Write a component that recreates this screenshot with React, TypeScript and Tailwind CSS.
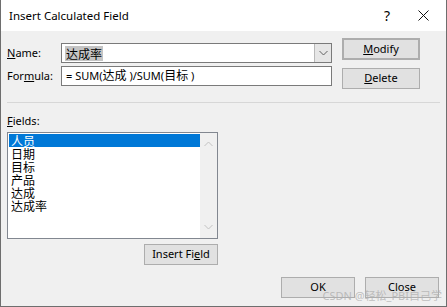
const UI = "font-['Noto_Sans','Noto_Sans_CJK_SC',sans-serif]";
const CJK = "font-['Noto_Sans_CJK_SC',sans-serif]";

function Btn({ children, className = '' }: { children: React.ReactNode; className?: string }) {
  return (
    <div
      className={`flex items-center justify-center bg-[#e1e1e1] border border-[#adadad] text-[11px] text-black ${className}`}
    >
      {children}
    </div>
  );
}

function Chevron({ up = false, color = '#606060' }: { up?: boolean; color?: string }) {
  return (
    <svg width="9" height="6" viewBox="0 0 9 6">
      <path
        d={up ? 'M0.5 5 L4.5 1 L8.5 5' : 'M0.5 1 L4.5 5 L8.5 1'}
        fill="none"
        stroke={color}
        strokeWidth="1"
      />
    </svg>
  );
}

const FIELDS = ['人员', '日期', '目标', '产品', '达成', '达成率'];

export default function App() {
  return (
    <div className={`relative w-[447px] h-[307px] bg-white ${UI} text-black overflow-hidden`}>
      <div className="flex flex-col h-full border-x border-b border-[#6e6e6e]">
        {/* title bar */}
        <div className="h-[31px] flex items-center bg-white shrink-0">
          <span className="pl-[8px] text-[11.5px] leading-none">Insert Calculated Field</span>
          <span className="ml-auto mr-[28px] text-[14px] leading-none">?</span>
          <svg width="11" height="11" viewBox="0 0 11 11" className="mr-[17px]">
            <path d="M0.5 0.5 L10.5 10.5 M10.5 0.5 L0.5 10.5" stroke="#111" strokeWidth="1" />
          </svg>
        </div>

        {/* body */}
        <div className="flex-1 bg-[#f0f0f0] flex flex-col px-[6px]">
          <div className="flex">
            <div className="flex flex-col gap-[3px] pt-[12px]">
              <div className="flex items-center h-[20px]">
                <span className="w-[54px] text-[11px]">
                  <u>N</u>ame:
                </span>
                <div className="w-[271px] h-[20px] bg-white border border-[#7a7a7a] flex items-center">
                  <span className={`ml-[3px] px-[1px] bg-[#c4c4c4] text-[12px] leading-[15px] ${CJK}`}>达成率</span>
                  <div className="ml-auto h-full w-[17px] bg-[#e6e6e6] border-l border-[#b9b9b9] flex items-center justify-center">
                    <Chevron />
                  </div>
                </div>
              </div>
              <div className="flex items-center h-[20px]">
                <span className="w-[54px] text-[11px]">
                  For<u>m</u>ula:
                </span>
                <div className="w-[271px] h-[20px] bg-white border border-[#7a7a7a] flex items-center">
                  <span className="ml-[4px] text-[11px] leading-none">
                    = SUM(<span className="text-[12px]">达成</span> )/SUM(<span className="text-[12px]">目标</span> )
                  </span>
                </div>
              </div>
            </div>
            <div className="flex flex-col gap-[8px] pt-[7px] ml-[10px]">
              <Btn className="w-[78px] h-[22px] border-2 border-[#0078d7]">
                <u>M</u>odify
              </Btn>
              <Btn className="w-[78px] h-[21px]">
                <u>D</u>elete
              </Btn>
            </div>
          </div>

          <div className="mt-[13px] h-px bg-[#d7d7d7]" />

          <div className="mt-[12px] text-[11px] leading-none">
            <u>F</u>ields:
          </div>

          <div className="mt-[6px] w-[211px] h-[107px] bg-white border border-[#828790] flex">
            <div className={`flex-1 pl-[1px] pt-[1px] ${CJK}`}>
              {FIELDS.map((f, i) => (
                <div
                  key={f}
                  className={`h-[13px] text-[12px] leading-[13px] pl-[2px] ${
                    i === 0 ? 'bg-[#0078d7] text-white' : ''
                  }`}
                >
                  {f}
                </div>
              ))}
            </div>
            <div className="w-[17px] bg-[#f0f0f0] flex flex-col items-center justify-between py-[8px]">
              <Chevron up color="#c2c2c2" />
              <Chevron color="#c2c2c2" />
            </div>
          </div>

          <div className="w-[211px] flex justify-end mt-[5px]">
            <Btn className="w-[74px] h-[21px]">
              Insert Fi<u>e</u>ld
            </Btn>
          </div>

          <div className="flex justify-end gap-[10px] mt-[12px] pr-[1px]">
            <Btn className="w-[74px] h-[21px]">OK</Btn>
            <Btn className="w-[74px] h-[21px]">Close</Btn>
          </div>
        </div>
      </div>

      <span className="absolute right-[5px] bottom-[6px] text-[11px] leading-none text-[#b0b0b0]/80">
        CSDN @轻松_PBI自己学
      </span>
    </div>
  );
}
